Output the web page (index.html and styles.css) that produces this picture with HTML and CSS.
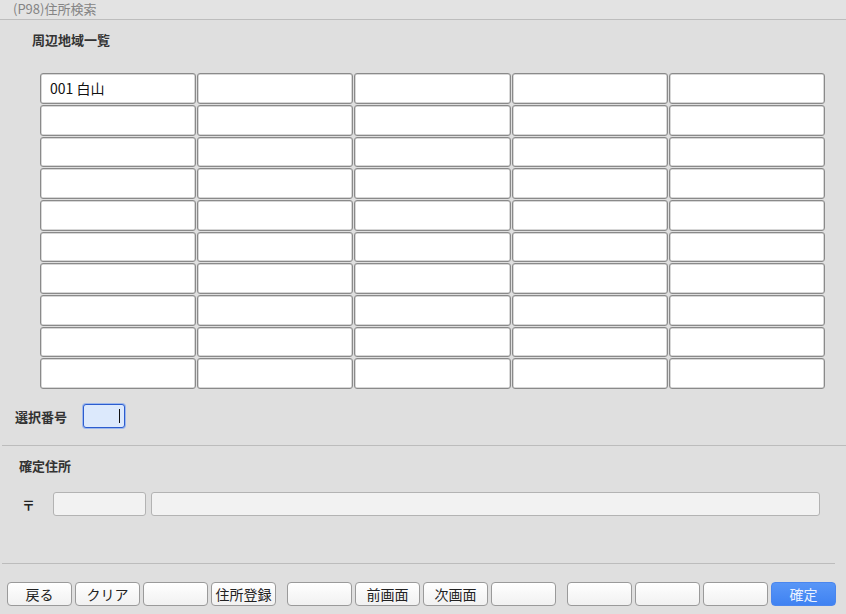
FILE: index.html
```html
<!DOCTYPE html>
<html lang="ja">
<head>
  <meta charset="UTF-8">
  <meta name="viewport" content="width=device-width, initial-scale=1.0">
  <title>(P98)住所検索</title>
  <link rel="stylesheet" href="styles.css">
</head>
<body>
  <div class="window">
    <div class="title">(P98)住所検索</div>

    <div class="section-label list-label">周辺地域一覧</div>
    <div class="grid">
      <div class="cell">001 白山</div><div class="cell"></div><div class="cell"></div><div class="cell"></div><div class="cell"></div>
      <div class="cell"></div><div class="cell"></div><div class="cell"></div><div class="cell"></div><div class="cell"></div>
      <div class="cell"></div><div class="cell"></div><div class="cell"></div><div class="cell"></div><div class="cell"></div>
      <div class="cell"></div><div class="cell"></div><div class="cell"></div><div class="cell"></div><div class="cell"></div>
      <div class="cell"></div><div class="cell"></div><div class="cell"></div><div class="cell"></div><div class="cell"></div>
      <div class="cell"></div><div class="cell"></div><div class="cell"></div><div class="cell"></div><div class="cell"></div>
      <div class="cell"></div><div class="cell"></div><div class="cell"></div><div class="cell"></div><div class="cell"></div>
      <div class="cell"></div><div class="cell"></div><div class="cell"></div><div class="cell"></div><div class="cell"></div>
      <div class="cell"></div><div class="cell"></div><div class="cell"></div><div class="cell"></div><div class="cell"></div>
      <div class="cell"></div><div class="cell"></div><div class="cell"></div><div class="cell"></div><div class="cell"></div>
    </div>

    <div class="select-row">
      <span class="field-label">選択番号</span>
      <div class="select-input"><span class="caret"></span></div>
    </div>

    <div class="divider"></div>

    <div class="section-label confirm-label">確定住所</div>
    <div class="address-row">
      <span class="zip-mark">〒</span>
      <div class="field zip"></div>
      <div class="field addr"></div>
    </div>

    <div class="divider short"></div>

    <div class="buttons">
      <div class="group">
        <button class="btn">戻る</button>
        <button class="btn">クリア</button>
        <button class="btn"></button>
        <button class="btn">住所登録</button>
      </div>
      <div class="group">
        <button class="btn"></button>
        <button class="btn">前画面</button>
        <button class="btn">次画面</button>
        <button class="btn"></button>
      </div>
      <div class="group">
        <button class="btn"></button>
        <button class="btn"></button>
        <button class="btn"></button>
        <button class="btn primary">確定</button>
      </div>
    </div>
  </div>
</body>
</html>
```

FILE: styles.css
```css
body {
  margin: 0;
  background: #dfdfdf;
  font-family: "Noto Sans CJK JP", "Liberation Sans", sans-serif;
  color: #222;
}

.window {
  width: 846px;
  height: 614px;
  overflow: hidden;
}

.title {
  height: 20px;
  box-sizing: border-box;
  padding-left: 13px;
  font-size: 13px;
  line-height: 18px;
  color: #858585;
  background: #e3e3e3;
  border-bottom: 1px solid #bdbdbd;
}

.section-label {
  font-size: 13px;
  line-height: 16px;
  font-weight: bold;
  color: #333;
}

.list-label {
  margin-top: 12px;
  padding-left: 32px;
}

.grid {
  margin: 25px 0 0 40px;
  width: 785px;
  height: 316px;
  display: grid;
  grid-template-columns: repeat(5, 1fr);
  grid-template-rows: repeat(10, 1fr);
  gap: 1px;
}

.cell {
  background: #fff;
  border: 1px solid #8a8a8a;
  border-radius: 3px;
  box-shadow: inset 0 0 0 0.5px #b0b0b0;
  font-size: 14px;
  line-height: 29px;
  padding-left: 9px;
  color: #111;
}

.select-row {
  margin-top: 15px;
  padding-left: 15px;
  display: flex;
  align-items: center;
  gap: 16px;
  height: 24px;
}

.field-label {
  font-size: 13px;
  font-weight: bold;
  color: #333;
}

.select-input {
  width: 36px;
  height: 22px;
  background: #dce9fc;
  border: 1px solid #2c5cce;
  border-radius: 3px;
  box-shadow: 0 0 0 1px #9db8ec;
  display: flex;
  align-items: center;
  justify-content: flex-end;
  padding-right: 4px;
}

.caret {
  width: 1px;
  height: 14px;
  background: #111;
}

.divider {
  margin: 17px 0 0 2px;
  height: 1px;
  background: #bcbcbc;
}

.divider.short {
  margin-top: 47px;
  width: 833px;
}

.confirm-label {
  margin-top: 12px;
  padding-left: 19px;
}

.address-row {
  margin-top: 18px;
  display: flex;
  align-items: center;
  height: 24px;
}

.zip-mark {
  flex-shrink: 0;
  width: 53px;
  padding-left: 22px;
  box-sizing: border-box;
  font-size: 13px;
  font-weight: bold;
}

.field {
  flex-shrink: 0;
  height: 22px;
  background: #f2f2f2;
  border: 1px solid #b3b3b3;
  border-radius: 3px;
}

.zip {
  width: 91px;
}

.addr {
  margin-left: 5px;
  width: 667px;
}

.buttons {
  margin: 18px 0 0 7px;
  display: flex;
  gap: 11px;
}

.group {
  display: flex;
  gap: 3px;
}

.btn {
  width: 65px;
  height: 24px;
  padding: 0;
  background: linear-gradient(#ffffff, #f1f1f1);
  border: 1px solid #9a9a9a;
  border-radius: 4px;
  font-family: inherit;
  font-size: 14px;
  color: #222;
  cursor: pointer;
}

.btn.primary {
  background: linear-gradient(#5896f7, #3f82f2);
  border-color: #4a86ee;
  color: #e9f1ff;
}
```
